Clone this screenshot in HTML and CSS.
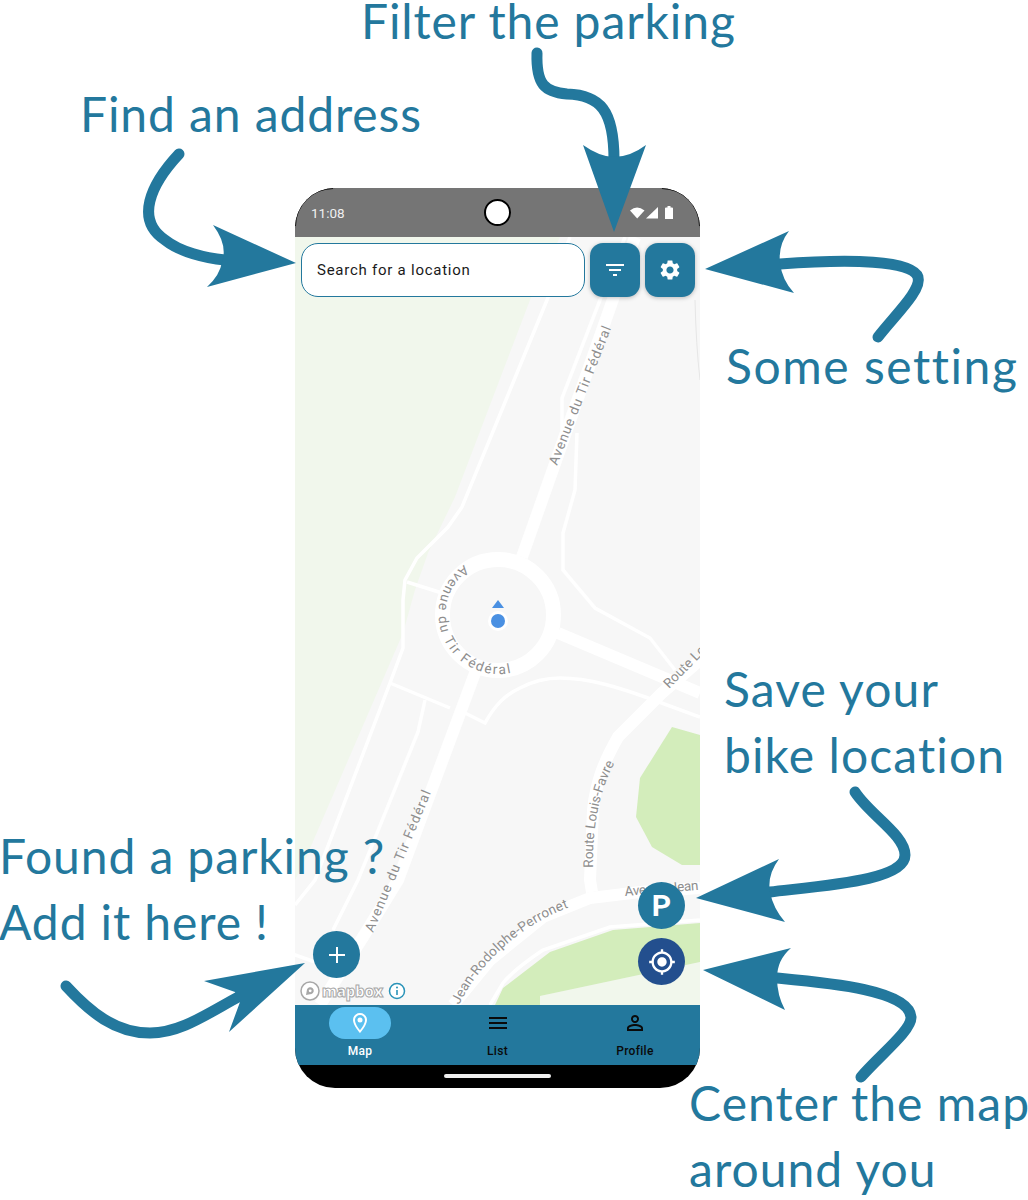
FILE: index.html
```html
<!DOCTYPE html>
<html lang="en">
<head>
  <meta charset="UTF-8">
  <title>Parking app overview</title>
  <link rel="stylesheet" href="styles.css">
</head>
<body>
  <div class="canvas">
    <div class="phone">
      <span class="corner corner-left"></span>
      <span class="corner corner-right"></span>

      <div class="status-bar">
        <span class="clock">11:08</span>
        <span class="camera"></span>
        <svg class="status-icons" width="44" height="14" viewBox="0 0 44 14">
          <path d="M0 4.500Q7-1.500 14.500 4.500L7.200 12.500Z" fill="#fff"/>
          <path d="M16 12.500L28 1V12.500Z" fill="#fff"/>
          <path d="M35 2.500Q35 1.500 36 1.500H37.500V0H40.500V1.500H42Q43 1.500 43 2.500V13H35Z" fill="#fff"/>
        </svg>
      </div>

      <div class="map">
        <svg class="map-drawing" width="405" height="768" viewBox="295 237 405 768">
          <rect x="295" y="237" width="405" height="768" fill="#f7f7f7"/>
          <path class="wood" d="M295 237H560L530 300L455 497L428 553L415 590L403 633L305 860L295 880Z"/>
          <path class="wood" d="M540 996L700 962V1005H540Z"/>
          <path class="park" d="M672 727L700 735V865H682L652 847L636 817L640 778Z"/>
          <path class="park" d="M700 923L613 930L550 952L503 988L495 1005H540V996L700 962Z"/>

          <g class="road-thin">
            <path d="M570 237L547 300L462 507L448 527L417 558L405 580L403 600V648L390 683L315 880L295 905"/>
            <path d="M407 582L442 593"/>
            <path d="M390 683L450 708M465 713L485 723C495 705 505 695 520 688C535 680 548 678 560 678C590 678 620 688 648 698L700 717"/>
            <path d="M425 700L418 732L358 880L333 930"/>
            <path d="M625 237L600 300L562 398V430"/>
            <path d="M577 433L575 490L563 533V570L595 608L650 638L675 670"/>
            <path d="M290 953L315 962"/>
            <path d="M700 920L610 927L543 950C525 962 512 972 503 983L490 1005"/>
          </g>
          <path class="edge" d="M695 300Q696 345 700 380"/>

          <g class="road-wide">
            <circle cx="498" cy="615" r="55.500" class="ring"/>
            <path d="M635 237L522 557"/>
            <path d="M475 673L398 880L363 937L320 1005"/>
            <path d="M558 633L700 693"/>
            <path d="M700 660L662 693L618 737C605 760 596 780 593 810L590 880L592 892"/>
            <path d="M700 888L640 892L590 898L543 917L490 960L453 1005"/>
          </g>

          <defs>
            <path id="tir-north" d="M557 466L620 306"/>
            <path id="tir-ring" d="M464 565A60 60 0 1 0 545 652"/>
            <path id="tir-south" d="M373 933L442 766"/>
            <path id="favre-low" d="M593 868Q592 806 614 764L625 745"/>
            <path id="favre-high" d="M669 689L745 612"/>
            <path id="perronet" d="M459 1005C478 965 520 925 570 907L600 897"/>
            <path id="jean" d="M625 896L720 888"/>
          </defs>
          <g class="road-label">
            <text><textPath href="#tir-north" textLength="148">Avenue du Tir Fédéral</textPath></text>
            <text><textPath href="#tir-ring" textLength="164">Avenue du Tir Fédéral</textPath></text>
            <text><textPath href="#tir-south" textLength="152">Avenue du Tir Fédéral</textPath></text>
            <text><textPath href="#favre-low" textLength="108">Route Louis-Favre</textPath></text>
            <text><textPath href="#favre-high" textLength="108">Route Louis-Favre</textPath></text>
            <text><textPath href="#perronet" textLength="150">Jean-Rodolphe-Perronet</textPath></text>
            <text><textPath href="#jean" textLength="74">Avenue Jean</textPath></text>
          </g>

          <path d="M498 600L504 608H492Z" fill="#4a90e2"/>
          <circle cx="498" cy="621" r="10" fill="#fff"/>
          <circle cx="498" cy="621" r="7" fill="#4a90e2"/>
        </svg>

        <div class="search-row">
          <div class="search-box">Search for a location</div>
          <div class="square-btn">
            <svg width="24" height="24" viewBox="0 0 24 24"><path d="M10 18h4v-2h-4v2zM3 6v2h18V6H3zm3 7h12v-2H6v2z" fill="#fff"/></svg>
          </div>
          <div class="square-btn">
            <svg width="24" height="24" viewBox="0 0 24 24"><path d="M19.140 12.940c.04-.3.06-.61.06-.94 0-.32-.02-.64-.07-.94l2.030-1.580c.18-.14.23-.41.12-.61l-1.920-3.320c-.12-.22-.37-.29-.59-.22l-2.390.96c-.5-.38-1.030-.7-1.620-.94l-.36-2.540c-.04-.24-.24-.41-.48-.41h-3.840c-.24 0-.43.17-.47.41l-.36 2.540c-.59.24-1.130.57-1.620.94l-2.390-.96c-.22-.08-.47 0-.59.22L2.740 8.870c-.12.21-.08.47.12.61l2.030 1.580c-.05.3-.09.63-.09.94s.02.64.07.94l-2.030 1.580c-.18.14-.23.41-.12.61l1.920 3.320c.12.22.37.29.59.22l2.390-.96c.5.38 1.030.7 1.620.94l.36 2.540c.05.24.24.41.48.41h3.840c.24 0 .44-.17.47-.41l.36-2.540c.59-.24 1.130-.56 1.620-.94l2.390.96c.22.08.47 0 .59-.22l1.920-3.320c.12-.22.07-.47-.12-.61l-2.010-1.580zM12 15.600c-1.980 0-3.600-1.620-3.600-3.600s1.620-3.600 3.600-3.600 3.600 1.620 3.600 3.600-1.620 3.600-3.600 3.600z" fill="#fff"/></svg>
          </div>
        </div>

        <div class="round-btn add-btn">
          <svg width="18" height="18" viewBox="0 0 18 18"><path d="M9 1V17M1 9H17" stroke="#fff" stroke-width="2"/></svg>
        </div>
        <div class="round-btn bike-btn">P</div>
        <div class="round-btn center-btn">
          <svg width="28" height="28" viewBox="0 0 24 24"><path d="M12 8c-2.210 0-4 1.790-4 4s1.790 4 4 4 4-1.790 4-4-1.790-4-4-4zm8.940 3c-.46-4.170-3.770-7.480-7.940-7.940V1h-2v2.060C6.830 3.520 3.520 6.830 3.060 11H1v2h2.060c.46 4.170 3.770 7.480 7.940 7.940V23h2v-2.060c4.170-.46 7.480-3.770 7.940-7.940H23v-2h-2.060zM12 19c-3.870 0-7-3.130-7-7s3.130-7 7-7 7 3.130 7 7-3.130 7-7 7z" fill="#fff"/></svg>
        </div>

        <div class="mapbox">
          <svg width="20" height="20" viewBox="0 0 20 20">
            <circle cx="10" cy="10" r="9" fill="#fff" stroke="#a8a8a8" stroke-width="1.500"/>
            <path d="M6 14L7 8.500A3.500 3.500 0 1 1 11.500 13Z" fill="#a8a8a8"/>
            <circle cx="10.200" cy="9.800" r="1.400" fill="#fff"/>
          </svg>
          <span class="mapbox-word">mapbox</span>
          <svg class="mapbox-info" width="18" height="18" viewBox="0 0 18 18">
            <circle cx="9" cy="9" r="7.500" fill="#fff" stroke="#2a93b8" stroke-width="1.500"/>
            <path d="M9 8V13" stroke="#2a93b8" stroke-width="1.600"/>
            <circle cx="9" cy="5.500" r="1" fill="#2a93b8"/>
          </svg>
        </div>
      </div>

      <nav class="tab-bar">
        <div class="tab tab-active">
          <span class="tab-icon">
            <svg width="24" height="24" viewBox="0 0 24 24"><path d="M12 2C8.130 2 5 5.130 5 9c0 5.250 7 13 7 13s7-7.750 7-13c0-3.870-3.130-7-7-7zm0 17.300C10.200 17 7 12.700 7 9a5 5 0 0 1 10 0c0 3.700-3.200 8-5 10.300z" fill="#fff"/><circle cx="12" cy="9" r="2.500" fill="#fff"/></svg>
          </span>
          Map
        </div>
        <div class="tab">
          <span class="tab-icon">
            <svg width="24" height="24" viewBox="0 0 24 24"><path d="M3 18h18v-2H3v2zm0-5h18v-2H3v2zm0-7v2h18V6H3z" fill="#0a0a0a"/></svg>
          </span>
          List
        </div>
        <div class="tab">
          <span class="tab-icon">
            <svg width="24" height="24" viewBox="0 0 24 24"><path d="M12 5.900c1.160 0 2.100.94 2.100 2.100s-.94 2.100-2.100 2.100S9.900 9.160 9.900 8s.94-2.100 2.100-2.100m0 9c2.970 0 6.100 1.460 6.100 2.100v1.100H5.900V17c0-.64 3.130-2.100 6.100-2.100M12 4C9.790 4 8 5.790 8 8s1.790 4 4 4 4-1.790 4-4-1.790-4-4-4zm0 9c-2.670 0-8 1.340-8 4v3h16v-3c0-2.660-5.330-4-8-4z" fill="#0a0a0a"/></svg>
          </span>
          Profile
        </div>
      </nav>

      <div class="gesture-bar"><span class="home-line"></span></div>
    </div>

    <!-- callouts around the phone -->
    <svg class="arrows" width="1028" height="1200" viewBox="0 0 1028 1200">
      <g class="arrow-line">
        <path d="M179 154C150 185 135 220 165 240C180 252 205 258 225 260"/>
        <path d="M537 53C536 85 545 92 567 94C600 95 614 110 614 160"/>
        <path d="M878 337C895 315 922 290 918 277C912 260 850 259 780 264"/>
        <path d="M855 792C870 815 905 835 905 855C905 880 830 885 770 892"/>
        <path d="M861 1077C880 1055 912 1030 911 1017C909 990 830 983 777 978"/>
        <path d="M66 986C90 1012 115 1033 150 1033C180 1033 205 1015 240 996"/>
      </g>
      <g class="arrow-head">
        <path d="M296 263L213 225Q228 245 222 262Q220 275 207 287Z"/>
        <path d="M614 232L583 145Q600 157 614 157Q630 157 646 145Z"/>
        <path d="M705 269L789 231Q778 245 780 263Q782 280 794 293Z"/>
        <path d="M696 898L779 859Q767 875 770 892Q773 908 785 922Z"/>
        <path d="M703 970L791 948Q777 960 777 978Q777 995 785 1010Z"/>
        <path d="M305 963L204 981L235 992L240 1002L229 1032Z"/>
      </g>
    </svg>

    <div class="note note-filter">Filter the parking</div>
    <div class="note note-find">Find an address</div>
    <div class="note note-setting">Some setting</div>
    <div class="note note-save">Save your<br>bike location</div>
    <div class="note note-found">Found a parking ?<br>Add it here !</div>
    <div class="note note-center">Center the map<br>around you</div>
  </div>
</body>
</html>
```

FILE: styles.css
```css
body {
  margin: 0;
  background: #ffffff;
  font-family: Roboto, sans-serif;
}

.canvas {
  position: relative;
  width: 1028px;
  height: 1200px;
  padding: 188px 0 0 295px;
  box-sizing: border-box;
  overflow: hidden;
}

/* phone */
.phone {
  position: relative;
  display: flex;
  flex-direction: column;
  width: 405px;
  height: 900px;
  background: #000;
  border-radius: 40px;
  overflow: hidden;
}

.corner {
  position: absolute;
  top: 0;
  width: 38px;
  height: 38px;
  border-top: 1.500px solid #000;
  z-index: 3;
  box-sizing: border-box;
}

.corner-left {
  left: 0;
  border-left: 1.500px solid #000;
  border-top-left-radius: 40px;
}

.corner-right {
  right: 0;
  border-right: 1.500px solid #000;
  border-top-right-radius: 40px;
}

.status-bar {
  position: relative;
  display: flex;
  align-items: center;
  justify-content: space-between;
  flex: 0 0 49px;
  padding: 0 26px 0 16px;
  background: #757575;
}

.clock {
  color: #f0f0f0;
  font-size: 13.500px;
}

.camera {
  position: absolute;
  left: 189px;
  top: 11px;
  width: 23px;
  height: 23px;
  background: #fff;
  border: 2px solid #000;
  border-radius: 50%;
}

.map {
  position: relative;
  flex: 0 0 768px;
  overflow: hidden;
}

.map-drawing {
  display: block;
}

.wood { fill: #f1f7ec; }
.park { fill: #d3edbb; }

.road-thin path {
  fill: none;
  stroke: #fff;
  stroke-width: 3.500;
}

.road-wide path,
.road-wide .ring {
  fill: none;
  stroke: #fff;
  stroke-width: 12;
}

.road-wide .ring {
  stroke-width: 15;
}

.edge {
  fill: none;
  stroke: #e6e6e6;
  stroke-width: 1;
}

.road-label text {
  fill: #8e8e8e;
  font-family: Roboto, sans-serif;
  font-size: 13.500px;
}

/* search row */
.search-row {
  position: absolute;
  top: 6px;
  left: 6px;
  right: 5px;
  display: flex;
  gap: 5px;
  height: 54px;
}

.search-box {
  display: flex;
  align-items: center;
  flex: 1;
  padding-left: 15px;
  background: #fff;
  border: 1px solid #23789d;
  border-radius: 17px;
  color: #1a1a1a;
  font-size: 15px;
  letter-spacing: 0.750px;
}

.square-btn {
  display: flex;
  align-items: center;
  justify-content: center;
  flex: 0 0 50px;
  background: #23789d;
  border-radius: 13px;
  box-shadow: 0 1px 4px rgba(0, 0, 0, 0.25);
}

.round-btn {
  position: absolute;
  display: flex;
  align-items: center;
  justify-content: center;
  width: 47px;
  height: 47px;
  background: #23789d;
  border-radius: 50%;
  color: #fff;
}

.add-btn {
  left: 18px;
  top: 694px;
}

.bike-btn {
  left: 343px;
  top: 645px;
  font-size: 30px;
  font-weight: 700;
}

.center-btn {
  left: 343px;
  top: 701px;
  background: #234f8e;
}

.mapbox {
  position: absolute;
  left: 5px;
  bottom: 4px;
  display: flex;
  align-items: center;
  gap: 2px;
}

.mapbox-word {
  color: #fff;
  font-family: "Open Sans", sans-serif;
  font-size: 15px;
  font-weight: 800;
  letter-spacing: -0.300px;
  -webkit-text-stroke: 1px #a8a8a8;
}

.mapbox-info {
  margin-left: 3px;
}

/* bottom tabs */
.tab-bar {
  display: flex;
  justify-content: space-between;
  flex: 0 0 60px;
  padding: 2px 34px 0;
  box-sizing: border-box;
  background: #23789d;
}

.tab {
  display: flex;
  flex-direction: column;
  align-items: center;
  gap: 5px;
  width: 62px;
  color: #0a0a0a;
  font-size: 12px;
  font-weight: 500;
  letter-spacing: 0.300px;
}

.tab-icon {
  display: flex;
  align-items: center;
  justify-content: center;
  width: 62px;
  height: 32px;
  border-radius: 16px;
}

.tab-active {
  color: #fff;
}

.tab-active .tab-icon {
  background: #5bc0f0;
}

.gesture-bar {
  display: flex;
  align-items: center;
  justify-content: center;
  flex: 1;
  padding-bottom: 2px;
}

.home-line {
  width: 107px;
  height: 4px;
  background: #f0f0f0;
  border-radius: 2px;
}

/* callouts */
.arrows {
  position: absolute;
  top: 0;
  left: 0;
}

.arrow-line path {
  fill: none;
  stroke: #23789d;
  stroke-width: 11;
  stroke-linecap: round;
}

.arrow-head path {
  fill: #23789d;
}

.note {
  position: absolute;
  color: #23789d;
  font-family: Lato, sans-serif;
  font-size: 48px;
  line-height: 66px;
  letter-spacing: 0.900px;
  white-space: nowrap;
}

.note-filter { left: 361px; top: 0; line-height: 42px; }
.note-find { left: 80px; top: 81px; }
.note-setting { left: 726px; top: 333px; letter-spacing: 1.550px; }
.note-save { left: 724px; top: 656px; letter-spacing: 1.100px; }
.note-found { left: -1px; top: 823px; }
.note-center { left: 689px; top: 1070px; letter-spacing: 1.050px; }
```
